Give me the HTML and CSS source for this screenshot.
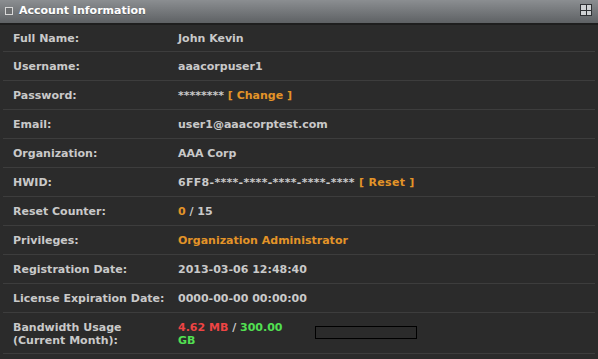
FILE: index.html
```html
<!DOCTYPE html>
<html lang="en">
<head>
  <meta charset="utf-8" />
  <title>Account Information</title>
  <link rel="stylesheet" href="styles.css">
</head>

<body>
  <div class="panel">
    <div class="panel-header">
      <span class="box-icon"></span>
      <span class="panel-title">Account Information</span>
      <span class="grid-icon"><i></i><i></i><i></i><i></i></span>
    </div>

    <div class="info">
      <div class="row">
        <div class="label">Full Name:</div>
        <div class="value">John Kevin</div>
      </div>
      <div class="row">
        <div class="label">Username:</div>
        <div class="value">aaacorpuser1</div>
      </div>
      <div class="row">
        <div class="label">Password:</div>
        <div class="value">******** <a class="link">[ Change ]</a></div>
      </div>
      <div class="row">
        <div class="label">Email:</div>
        <div class="value">user1@aaacorptest.com</div>
      </div>
      <div class="row">
        <div class="label">Organization:</div>
        <div class="value">AAA Corp</div>
      </div>
      <div class="row">
        <div class="label">HWID:</div>
        <div class="value hwid">6FF8-****-****-****-****-**** <a class="link">[ Reset ]</a></div>
      </div>
      <div class="row">
        <div class="label">Reset Counter:</div>
        <div class="value"><span class="orange">0</span> / 15</div>
      </div>
      <div class="row">
        <div class="label">Privileges:</div>
        <div class="value orange">Organization Administrator</div>
      </div>
      <div class="row">
        <div class="label">Registration Date:</div>
        <div class="value">2013-03-06 12:48:40</div>
      </div>
      <div class="row">
        <div class="label">License Expiration Date:</div>
        <div class="value">0000-00-00 00:00:00</div>
      </div>
      <div class="row row-tall">
        <div class="label">Bandwidth Usage<br>(Current Month):</div>
        <div class="value usage">
          <div class="usage-text">
            <div><span class="red">4.62 MB</span> / <span class="green">300.00</span></div>
            <div class="green">GB</div>
          </div>
          <div class="usage-bar"><div class="usage-fill" style="width: 0%"></div></div>
        </div>
      </div>
    </div>
  </div>
</body>
</html>
```

FILE: styles.css
```css
body {
  margin: 0;
  background: #2b2b2b;
  font-family: "DejaVu Sans", "Liberation Sans", sans-serif;
}

.panel {
  width: 598px;
  height: 359px;
  background: #2b2b2b;
  overflow: hidden;
}

.panel-header {
  height: 23px;
  background: linear-gradient(#8b8e91, #5e6164);
  border-bottom: 2px solid #1e1e1e;
  display: flex;
  align-items: center;
  padding: 0 6px 0 5px;
}

.box-icon {
  width: 6px;
  height: 6px;
  background: #6c6e70;
  border: 1px solid #d8d8d8;
  margin-right: 6px;
  margin-top: -2px;
}

.panel-title {
  color: #ffffff;
  font-weight: bold;
  font-size: 11px;
  flex: 1;
  margin-top: -2px;
  text-shadow: 0 1px 0 #55585b;
}

.grid-icon {
  width: 10px;
  height: 10px;
  display: grid;
  grid-template-columns: 1fr 1fr;
  gap: 1px;
  padding: 1px;
  background: #2e3033;
  margin-top: -3px;
}

.grid-icon i {
  background: #cfd1d3;
}

.info {
  margin: 0 3px;
}

.row {
  display: grid;
  grid-template-columns: 165px 1fr;
  align-items: center;
  height: 28px;
  border-bottom: 1px solid #3d3d3d;
  padding-left: 10px;
  font-size: 11px;
  font-weight: bold;
  color: #c9c9c9;
}

.row:first-child {
  height: 26px;
}

.row-tall {
  height: 40px;
}

.row-tall .label {
  line-height: 13px;
  margin-top: 2px;
}

.hwid {
  letter-spacing: 0.3px;
}

.link,
.orange {
  color: #e39428;
}

.red {
  color: #ee4444;
}

.green {
  color: #52e052;
}

.usage {
  display: flex;
  align-items: center;
}

.usage-text {
  width: 118px;
  line-height: 13px;
  margin-top: 2px;
}

.usage-bar {
  width: 100px;
  height: 11px;
  border: 1px solid #000;
  margin-left: 19px;
  margin-top: -2px;
}

.usage-fill {
  height: 100%;
  background: #52e052;
}
```
